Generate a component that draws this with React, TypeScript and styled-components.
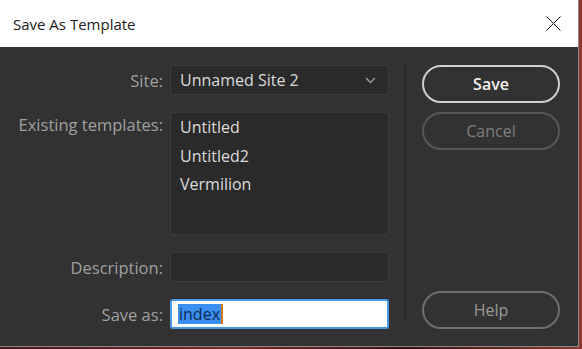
import styled, { createGlobalStyle } from "styled-components";

const Global = createGlobalStyle`
  html, body {
    margin: 0;
    padding: 0;
    background: linear-gradient(90deg, #4a1518, #7a2a2a 40%, #3a1010 70%, #8a3a30);
    font-family: "Open Sans", "Noto Sans", sans-serif;
  }
`;

// Window
const Window = styled.div`
  width: 579px;
  height: 347px;
  display: flex;
  flex-direction: column;
  box-sizing: border-box;
  border-right: 1px solid #8a8a8a;
  border-bottom: 1px solid #8a8a8a;
  background: #323232;
`;

const TitleBar = styled.div`
  height: 47px;
  flex: none;
  background: #ffffff;
  display: flex;
  align-items: center;
  justify-content: space-between;
  padding: 0 17px 0 13px;
  font-size: 15px;
  color: #1a1a1a;
`;

const Close = styled.button`
  border: 0;
  background: none;
  padding: 0;
  width: 16px;
  height: 16px;
  display: flex;
  align-items: center;
  justify-content: center;
`;

// Body
const Body = styled.div`
  flex: 1;
  display: flex;
  padding: 18px 0 0 0;
`;

const Form = styled.div`
  display: grid;
  grid-template-columns: 163px 219px;
  grid-template-rows: 30px 123px 30px 30px;
  column-gap: 7px;
  row-gap: 17px;
  align-content: start;
`;

const Label = styled.label<{ $top?: boolean }>`
  font-size: 16.5px;
  color: #a0a0a0;
  text-align: right;
  align-self: ${({ $top }) => ($top ? "start" : "center")};
  padding-top: ${({ $top }) => ($top ? "1px" : "0")};
  white-space: nowrap;
`;

const Field = styled.div`
  box-sizing: border-box;
  background: #2a2a2a;
  border: 1px solid #3a3a3a;
  border-radius: 3px;
`;

const Select = styled(Field)`
  display: flex;
  align-items: center;
  justify-content: space-between;
  padding: 0 12px 0 9px;
  font-size: 16px;
  color: #dcdcdc;
`;

const List = styled(Field)`
  display: flex;
  flex-direction: column;
  padding: 0 9px;
  font-size: 16px;
  color: #dcdcdc;
`;

const ListItem = styled.div`
  height: 28.5px;
  line-height: 28.5px;
`;

const TextInput = styled.div`
  box-sizing: border-box;
  background: #ffffff;
  border: 2px solid #4a98e8;
  border-radius: 3px;
  display: flex;
  align-items: center;
  padding: 0 6px;
  font-size: 16px;
`;

const Selected = styled.span`
  background: #3b8ff0;
  color: #0b2a55;
  line-height: 20px;
  border-right: 2px solid #d07a20;
  padding: 0 1px;
`;

const Divider = styled.div`
  width: 3px;
  height: 254px;
  background: #2b2b2b;
  margin: 0 15px 0 15px;
`;

const Buttons = styled.div`
  display: flex;
  flex-direction: column;
  width: 138px;
`;

const Button = styled.button<{ $tone: "primary" | "muted" | "help" }>`
  box-sizing: border-box;
  height: 38px;
  border-radius: 19px;
  background: transparent;
  font-family: inherit;
  font-size: 16px;
  border: 2px solid
    ${({ $tone }) =>
      $tone === "primary" ? "#cfcfcf" : $tone === "muted" ? "#575757" : "#6e6e6e"};
  color: ${({ $tone }) =>
    $tone === "primary" ? "#f2f2f2" : $tone === "muted" ? "#7f7f7f" : "#9a9a9a"};
  font-weight: ${({ $tone }) => ($tone === "primary" ? 600 : 400)};
`;

const Spacer = styled.div<{ $h: number }>`
  height: ${({ $h }) => $h}px;
  flex: none;
`;

const Chevron = () => (
  <svg width="11" height="7" viewBox="0 0 11 7">
    <path d="M1 1l4.5 4.5L10 1" fill="none" stroke="#a0a0a0" strokeWidth="1.4" />
  </svg>
);

export default function App() {
  return (
    <>
      <Global />
      <Window>
        <TitleBar>
          <span>Save As Template</span>
          <Close aria-label="Close">
            <svg width="15" height="15" viewBox="0 0 15 15">
              <path d="M0.5 0.5l14 14M14.5 0.5l-14 14" stroke="#111" strokeWidth="1" />
            </svg>
          </Close>
        </TitleBar>
        <Body>
          <Form>
            <Label>Site:</Label>
            <Select>
              <span>Unnamed Site 2</span>
              <Chevron />
            </Select>
            <Label $top>Existing templates:</Label>
            <List>
              <ListItem>Untitled</ListItem>
              <ListItem>Untitled2</ListItem>
              <ListItem>Vermilion</ListItem>
            </List>
            <Label>Description:</Label>
            <Field />
            <Label>Save as:</Label>
            <TextInput>
              <Selected>index</Selected>
            </TextInput>
          </Form>
          <Divider />
          <Buttons>
            <Button $tone="primary">Save</Button>
            <Spacer $h={9} />
            <Button $tone="muted">Cancel</Button>
            <Spacer $h={141} />
            <Button $tone="help">Help</Button>
          </Buttons>
        </Body>
      </Window>
    </>
  );
}
